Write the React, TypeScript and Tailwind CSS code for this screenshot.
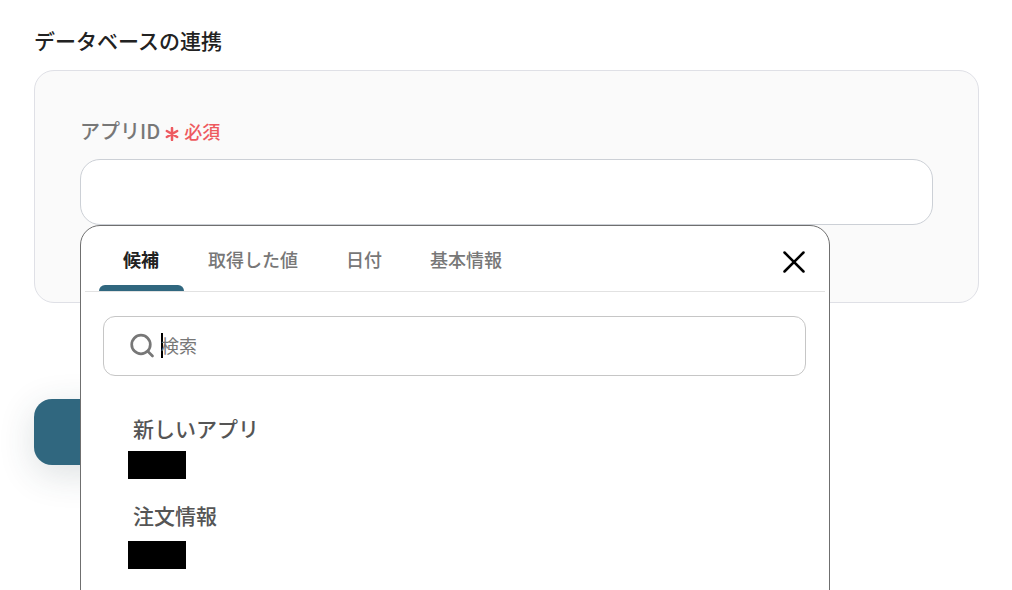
const tabs = ['候補', '取得した値', '日付', '基本情報']
const apps = [
  { name: '新しいアプリ', gap: 'mt-1.5' },
  { name: '注文情報', gap: 'mt-[9px]' },
]

function TabBar() {
  return (
    <div className="mx-1 flex h-[66px] items-stretch justify-between border-b border-[#e2e2e2] pr-[19px] pl-[14px]">
      <div role="tablist" className="flex">
        {tabs.map((tab, i) => (
          <button
            key={tab}
            type="button"
            role="tab"
            aria-selected={i === 0}
            className={
              i === 0
                ? 'relative pt-0.5 pr-[25px] pl-6 text-[18px] font-bold text-[#222]'
                : 'relative px-6 pt-0.5 text-[18px] font-medium text-[#777]'
            }
          >
            {tab}
            {i === 0 && (
              <span className="absolute inset-x-0 bottom-0 h-1.5 rounded-t-md bg-[#30677f]" />
            )}
          </button>
        ))}
      </div>
      <button type="button" aria-label="閉じる" className="pt-1.5">
        <svg viewBox="0 0 24 24" className="h-6 w-6" fill="none">
          <path
            d="M2.5 2.5 21.5 21.5M21.5 2.5 2.5 21.5"
            stroke="#000"
            strokeWidth="2.5"
            strokeLinecap="round"
          />
        </svg>
      </button>
    </div>
  )
}

function SearchBox() {
  return (
    <label className="mr-[23px] ml-[22px] mt-6 flex h-[60px] items-center rounded-xl border border-[#c6c6c6] pr-4 pl-[25px]">
      <svg viewBox="0 0 26 26" className="h-[26px] w-[26px]" fill="none">
        <g stroke="#777" strokeWidth="2.7" strokeLinecap="round">
          <circle cx="12" cy="11.5" r="9.3" />
          <path d="m19 18.5 4.5 4.5" />
        </g>
      </svg>
      <span className="mb-0.5 ml-1.5 h-[25px] w-0.5 bg-black" />
      <input
        type="text"
        aria-label="検索"
        placeholder="検索"
        className="-ml-0.5 min-w-0 flex-1 bg-transparent pb-0.5 text-[18px] text-[#333] outline-none placeholder:text-[#777]"
      />
    </label>
  )
}

function Picker() {
  return (
    <div className="absolute top-full left-0 min-h-screen w-[750px] rounded-t-[20px] border border-[#6f6f6f] bg-white">
      <TabBar />
      <SearchBox />
      <ul className="mt-[35px] ml-[47px]">
        {apps.map((app) => (
          <li key={app.name} className="mb-[19px]">
            <button type="button" className="block text-left">
              <span className="block pl-[5px] text-[21px] leading-[34px] font-medium text-[#555]">
                {app.name}
              </span>
              <span className={`${app.gap} block h-7 w-[58px] bg-black`} />
            </button>
          </li>
        ))}
      </ul>
    </div>
  )
}

export default function App() {
  return (
    <main className="h-screen overflow-hidden bg-white pt-[23px] pr-[33px] pl-[34px] font-['Noto_Sans_CJK_JP',sans-serif]">
      <h1 className="text-[21px] leading-[34px] font-medium text-[#222]">
        データベースの連携
      </h1>
      <section className="mt-[13px] rounded-[20px] border border-[#dfe0e6] bg-[#fafafa] px-[45px] pt-[43px] pb-[77px]">
        <label
          htmlFor="app-id"
          className="flex h-[34px] items-center text-[20px] font-medium text-[#777]"
        >
          アプリID
          <svg
            viewBox="0 0 14 14"
            className="mt-1.5 ml-[5px] h-3.5 w-3.5"
            stroke="#ee5a60"
            strokeWidth="2.5"
            strokeLinecap="round"
          >
            <path d="M7 1v12M1.8 4l10.4 6M12.2 4 1.8 10" />
          </svg>
          <span className="ml-[5px] text-[18px] text-[#ee5a60]">必須</span>
        </label>
        <div className="relative mt-[11px]">
          <input
            id="app-id"
            type="text"
            className="block h-[66px] w-full rounded-[20px] border border-[#ccd0d6] bg-white px-5 text-[18px] outline-none"
          />
          <Picker />
        </div>
      </section>
      <button
        type="button"
        aria-label="保存"
        className="mt-24 block h-[66px] w-60 rounded-[18px] bg-[#30677f] shadow-[0_9px_36px_rgba(40,60,70,0.16)]"
      />
    </main>
  )
}
